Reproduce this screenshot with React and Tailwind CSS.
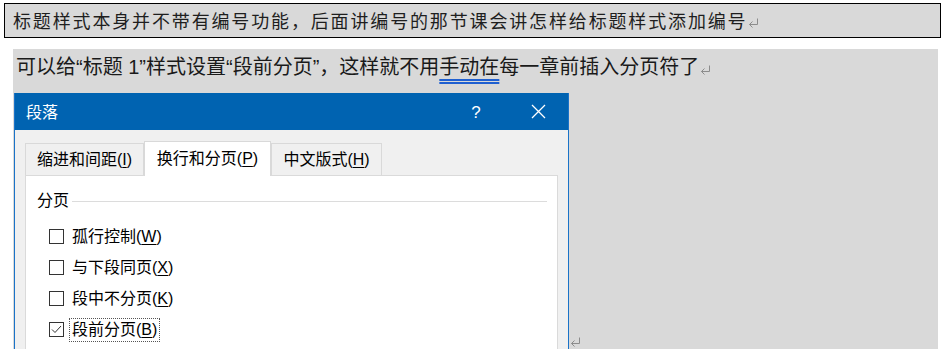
import React from 'react';

const sans = "font-['Liberation_Sans','Noto_Sans_CJK_SC',sans-serif]";

const ReturnMark = ({ className = '' }) => (
    <svg width="11" height="11" viewBox="0 0 11 11" className={className}>
        <path d="M9.5 1.5V7.5H1.5M1.5 7.5L4.5 4.5M1.5 7.5L4.5 10.5" fill="none" stroke="#8c8c8c" strokeWidth="1" />
    </svg>
);

const Key = ({ label, k }) => (
    <>
        {label}(<span className="underline underline-offset-2">{k}</span>)
    </>
);

const CheckRow = ({ label, k, checked, focused }) => (
    <div className="h-[31px] flex items-center pl-[23px]">
        <div className="w-[15px] h-[15px] border border-[#333] bg-white flex items-center justify-center">
            {checked && (
                <svg width="13" height="13" viewBox="0 0 13 13">
                    <path d="M2 6.5L5 9.5L11 3" fill="none" stroke="#333" strokeWidth="1" />
                </svg>
            )}
        </div>
        <div
            className={`ml-[5px] px-[2px] h-[24px] flex items-center text-[16px] text-black ${
                focused ? 'border border-dotted border-[#555]' : 'border border-transparent'
            }`}
        >
            <Key label={label} k={k} />
        </div>
    </div>
);

const Tab = ({ children, active, w }) => (
    <div
        className={`${w} flex items-center justify-center text-[16px] text-black border border-[#d9d9d9] ${
            active ? 'h-[35px] bg-white border-b-0 -mb-px relative z-10' : 'h-[32px] bg-[#f0f0f0] border-b-0'
        }`}
    >
        {children}
    </div>
);

const ParagraphDialog = () => (
    <div className="w-[555px] h-[256px] flex flex-col bg-[#f0f0f0] border-x border-[#1a73c8] overflow-hidden">
        <div className="h-[37px] shrink-0 bg-[#0063b1] flex items-center text-white">
            <span className="pl-[11px] text-[16px] mt-[3px]">段落</span>
            <span className="ml-auto text-[17px] w-[20px] text-center mt-[2px]">?</span>
            <div className="w-[82px] flex justify-center pl-[22px]">
                <svg width="15" height="15" viewBox="0 0 15 15">
                    <path d="M1 1L14 14M14 1L1 14" stroke="#fff" strokeWidth="1.3" />
                </svg>
            </div>
        </div>

        <div className="flex items-end pl-[10px] pt-[11px]">
            <Tab w="w-[119px]"><Key label="缩进和间距" k="I" /></Tab>
            <Tab w="w-[127px]" active><Key label="换行和分页" k="P" /></Tab>
            <Tab w="w-[111px]"><Key label="中文版式" k="H" /></Tab>
        </div>

        <div className="ml-[10px] w-[533px] flex-1 bg-white border border-[#dadada] border-b-0">
            <div className="flex items-center pt-[15px] pl-[11px] pr-[10px]">
                <span className="text-[16px] leading-[20px] text-black">分页</span>
                <div className="flex-1 h-px bg-[#dcdcdc] ml-[3px]" />
            </div>
            <div className="mt-[10px]">
                <CheckRow label="孤行控制" k="W" />
                <CheckRow label="与下段同页" k="X" />
                <CheckRow label="段中不分页" k="K" />
                <CheckRow label="段前分页" k="B" checked focused />
            </div>
        </div>
    </div>
);

const App = () => {
    return (
        <div className={`w-[945px] h-[356px] bg-white overflow-hidden ${sans}`}>
            <div className="mt-[3px] ml-[4px] w-[937px] h-[35px] border border-black bg-[#d9d9d9] flex items-center pl-[8px]">
                <span className="text-[18px] tracking-[1.85px] text-[#1e1e1e] font-['Noto_Sans_CJK_SC',sans-serif]">
                    标题样式本身并不带有编号功能，后面讲编号的那节课会讲怎样给标题样式添加编号
                </span>
                <ReturnMark className="ml-[1px] mt-[4px]" />
            </div>

            <div className="mt-[11px] ml-[13px] w-[925px] h-[300px] bg-[#d9d9d9] flex flex-col">
                <div className="h-[36px] flex items-center pl-[3px] text-[20px] text-[#1a1a1a]">
                    <span>可以给“标题 1”样式设置“段前分页”，这样就不用</span>
                    <span className="underline decoration-double decoration-[#1f5fd0] underline-offset-[5px]">手动在</span>
                    <span>每一章前插入分页符了</span>
                    <ReturnMark className="ml-[1px] mt-[4px]" />
                </div>
                <div className="mt-[8px] ml-[1px] flex items-end">
                    <ParagraphDialog />
                    <ReturnMark className="mb-[2px] ml-[1px]" />
                </div>
            </div>
        </div>
    );
};

export default App;
